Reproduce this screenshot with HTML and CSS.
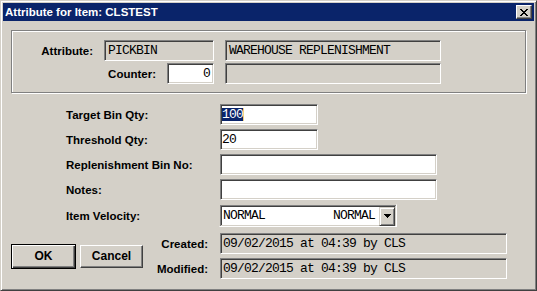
FILE: index.html
```html
<!DOCTYPE html>
<html lang="en">
<head>
	<meta charset="UTF-8">
	<meta name="viewport" content="width=device-width, initial-scale=1.0">
	<title>Attribute for Item: CLSTEST</title>
	<link rel="stylesheet" href="styles.css">
</head>
<body>
	<div class="window">
        <div class="titlebar">
            <span class="title">Attribute for Item: CLSTEST</span>
            <div class="close">
                <svg width="8" height="7" viewBox="0 0 8 7" shape-rendering="crispEdges"><path fill="#000" d="M0 0h2v1H0zM6 0h2v1H6zM1 1h2v1H1zM5 1h2v1H5zM2 2h4v1H2zM3 3h2v1H3zM2 4h4v1H2zM1 5h2v1H1zM5 5h2v1H5zM0 6h2v1H0zM6 6h2v1H6z"/></svg>
            </div>
        </div>
        <div class="content">
            <div class="group">
                <span class="label">Attribute:</span>
                <div class="field ro pad">PICKBIN</div>
                <div class="field ro pad">WAREHOUSE REPLENISHMENT</div>
                <div class="counterRow">
                    <span class="label">Counter:</span>
                    <div class="field counter">0</div>
                </div>
                <div class="field ro"></div>
            </div>

            <div class="form">
                <span class="label">Target Bin Qty:</span>
                <div class="field short"><span class="selected">100</span></div>
                <span class="label">Threshold Qty:</span>
                <div class="field short">20</div>
                <span class="label">Replenishment Bin No:</span>
                <div class="field long"></div>
                <span class="label">Notes:</span>
                <div class="field long"></div>
                <span class="label">Item Velocity:</span>
                <div class="combo">
                    <span class="comboText">NORMAL</span>
                    <span class="comboValue">NORMAL</span>
                    <div class="dropBtn">
                        <svg width="7" height="4" viewBox="0 0 7 4" shape-rendering="crispEdges"><path fill="#000" d="M0 0h7v1H0zM1 1h5v1H1zM2 2h3v1H2zM3 3h1v1H3z"/></svg>
                    </div>
                </div>
            </div>

            <div class="footer">
                <div class="button default">OK</div>
                <div class="button">Cancel</div>
                <div class="stamps">
                    <span class="label">Created:</span>
                    <div class="field ro">09/02/2015 at 04:39 by CLS</div>
                    <span class="label">Modified:</span>
                    <div class="field ro">09/02/2015 at 04:39 by CLS</div>
                </div>
            </div>
        </div>
	</div>
</body>
</html>
```

FILE: styles.css
```css
* {
    box-sizing: border-box;
}
body {
    margin: 0;
    background-color: #d4d0c8;
    font-family: "Liberation Sans", Arial, sans-serif;
}
.window {
    width: 537px;
    height: 291px;
    padding: 2px;
    background-color: #d4d0c8;
    border: 1px solid;
    border-color: #d4d0c8 #404040 #404040 #d4d0c8;
    box-shadow: inset 1px 1px #fff, inset -1px -1px #808080;
}
.titlebar {
    height: 18px;
    padding: 0 2px;
    background-color: #0a246a;
    display: flex;
    align-items: center;
    justify-content: space-between;
}
.title {
    color: #fff;
    font-weight: bold;
    font-size: 11.5px;
}
.close {
    width: 16px;
    height: 14px;
    background-color: #d4d0c8;
    border: 1px solid;
    border-color: #fff #404040 #404040 #fff;
    box-shadow: inset -1px -1px #808080;
    display: flex;
    align-items: center;
    justify-content: center;
    padding-right: 1px;
}
.content {
    padding: 0 8px;
}
.label {
    font-weight: bold;
    font-size: 11.5px;
    color: #000;
    white-space: nowrap;
}

/* sunken edit boxes */
.field {
    height: 21px;
    padding: 0 2px;
    background-color: #fff;
    border: 1px solid;
    border-color: #808080 #fff #fff #808080;
    box-shadow: inset 1px 1px #404040, inset -1px -1px #d4d0c8;
    font-family: "Liberation Mono", "Courier New", monospace;
    font-size: 13px;
    letter-spacing: -0.8px;
    line-height: 19px;
    white-space: nowrap;
    overflow: hidden;
}
.field.ro {
    background-color: #d4d0c8;
}
.field.pad {
    padding-left: 3px;
}

.group {
    margin-top: 9px;
    padding: 9px 0 8px 0;
    border: 1px solid #808080;
    box-shadow: inset 1px 1px #fff, 1px 1px #fff;
    display: grid;
    grid-template-columns: 81px 110px 216px;
    grid-auto-rows: 21px;
    column-gap: 11px;
    row-gap: 2px;
    align-items: center;
}
.group > .label {
    justify-self: end;
}
.group .field:nth-of-type(3) {
    margin-left: -1px;
}
.counterRow {
    grid-column: 1 / 3;
    display: flex;
    justify-content: flex-end;
    align-items: center;
    gap: 11px;
}
.field.counter {
    width: 47px;
    text-align: right;
    padding-right: 3px;
}

.form {
    margin: 11px 0 0 55px;
    display: grid;
    grid-template-columns: 154px auto;
    grid-template-rows: 21px 21px 21px 21px 23px;
    row-gap: 4px;
    align-items: center;
    justify-items: start;
}
.field.short {
    width: 98px;
    padding-left: 1px;
}
.field.long {
    width: 217px;
}
.selected {
    display: inline-block;
    line-height: 13px;
    background-color: #0a246a;
    color: #fff;
    border-right: 1px solid #f0d080;
}

.combo {
    width: 178px;
    height: 23px;
    margin-left: -1px;
    padding: 1px;
    background-color: #fff;
    border: 1px solid;
    border-color: #d4d0c8 #fff #fff #d4d0c8;
    box-shadow: inset 1px 1px #808080, inset -1px -1px #d4d0c8, inset 2px 2px #404040;
    display: flex;
    align-items: center;
    font-family: "Liberation Mono", "Courier New", monospace;
    font-size: 13px;
    letter-spacing: -0.8px;
}
.comboText {
    padding-left: 2px;
    flex: 1;
}
.comboValue {
    margin-right: 4px;
}
.dropBtn {
    width: 16px;
    height: 19px;
    margin-top: 1px;
    background-color: #d4d0c8;
    border: 1px solid;
    border-color: #d4d0c8 #404040 #404040 #d4d0c8;
    box-shadow: inset 1px 1px #fff, inset -1px -1px #808080;
    display: flex;
    align-items: center;
    justify-content: center;
}

.footer {
    margin-top: 6px;
    display: flex;
    align-items: center;
}
.button {
    width: 63px;
    height: 23px;
    background-color: #d4d0c8;
    border: 1px solid;
    border-color: #fff #404040 #404040 #fff;
    box-shadow: inset -1px -1px #808080;
    font-weight: bold;
    font-size: 12px;
    display: flex;
    align-items: center;
    justify-content: center;
}
.button.default {
    width: 65px;
    height: 25px;
    margin-right: 4px;
    border: 1px solid #000;
    box-shadow: inset 1px 1px #fff, inset -1px -1px #404040, inset -2px -2px #808080;
}
.stamps {
    display: grid;
    grid-template-columns: 65px 287px;
    grid-auto-rows: 21px;
    column-gap: 12px;
    row-gap: 4px;
    align-items: center;
}
.stamps > .label {
    justify-self: end;
}
```
